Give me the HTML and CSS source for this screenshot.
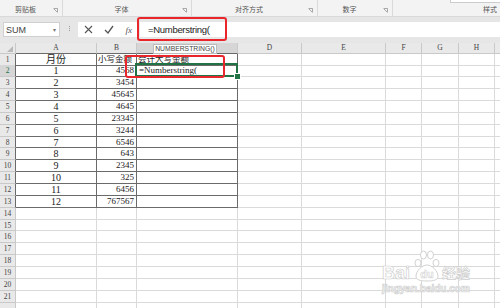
FILE: index.html
```
<!DOCTYPE html>
<html>
	<head>
		<meta charset="UTF-8">
		<title>Numberstring</title>
		<link rel="stylesheet" href="styles.css">
	</head>
	<body>
		<div class="ribbon">
			<div class="group g1"><span class="label">剪贴板</span><svg class="launch" viewBox="0 0 5 5"><path d="M0.5 0.5h4v4M1 1l3 3" fill="none" stroke="#888" stroke-width="0.7"/></svg></div>
			<div class="group g2"><span class="label">字体</span><svg class="launch" viewBox="0 0 5 5"><path d="M0.5 0.5h4v4M1 1l3 3" fill="none" stroke="#888" stroke-width="0.7"/></svg></div>
			<div class="group g3"><span class="label">对齐方式</span><svg class="launch" viewBox="0 0 5 5"><path d="M0.5 0.5h4v4M1 1l3 3" fill="none" stroke="#888" stroke-width="0.7"/></svg></div>
			<div class="group g4"><span class="label">数字</span><svg class="launch" viewBox="0 0 5 5"><path d="M0.5 0.5h4v4M1 1l3 3" fill="none" stroke="#888" stroke-width="0.7"/></svg></div>
			<div class="group g5"><span class="topbox"></span><span class="label">样式</span></div>
		</div>

		<div class="fbar">
			<div class="namebox"><span>SUM</span><span class="drop">▾</span></div>
			<div class="grip"><i></i><i></i><i></i></div>
			<div class="btns">
				<svg width="9" height="9" viewBox="0 0 9 9"><path d="M1 1l7 7M8 1l-7 7" stroke="#555" stroke-width="1.1"/></svg>
				<svg width="10" height="9" viewBox="0 0 10 9"><path d="M1 5l3 3 5-7" fill="none" stroke="#555" stroke-width="1.3"/></svg>
				<span class="fx">fx</span>
			</div>
			<div class="input">=Numberstring(</div>
		</div>

		<div class="sheet">
			<div class="row head"><span class="ch corner"></span><span class="ch tb">A</span><span class="ch tb">B</span><span class="ch tb on"></span><span class="ch">D</span><span class="ch">E</span><span class="ch">F</span><span class="ch">G</span><span class="ch">H</span><span class="ch"></span></div>
			<div class="row"><span class="rh tl">1</span><span class="c t mid">月份</span><span class="c t cap">小写金额</span><span class="c t cap">会计大写金额</span><span class="c"></span><span class="c"></span><span class="c"></span><span class="c"></span><span class="c"></span><span class="c"></span></div>
			<div class="row"><span class="rh tl on">2</span><span class="c t mid">1</span><span class="c t num">4568</span><span class="c t sel">=Numberstring(</span><span class="c"></span><span class="c"></span><span class="c"></span><span class="c"></span><span class="c"></span><span class="c"></span></div>
			<div class="row"><span class="rh tl">3</span><span class="c t mid">2</span><span class="c t num">3454</span><span class="c t"></span><span class="c"></span><span class="c"></span><span class="c"></span><span class="c"></span><span class="c"></span><span class="c"></span></div>
			<div class="row"><span class="rh tl">4</span><span class="c t mid">3</span><span class="c t num">45645</span><span class="c t"></span><span class="c"></span><span class="c"></span><span class="c"></span><span class="c"></span><span class="c"></span><span class="c"></span></div>
			<div class="row"><span class="rh tl">5</span><span class="c t mid">4</span><span class="c t num">4645</span><span class="c t"></span><span class="c"></span><span class="c"></span><span class="c"></span><span class="c"></span><span class="c"></span><span class="c"></span></div>
			<div class="row"><span class="rh tl">6</span><span class="c t mid">5</span><span class="c t num">23345</span><span class="c t"></span><span class="c"></span><span class="c"></span><span class="c"></span><span class="c"></span><span class="c"></span><span class="c"></span></div>
			<div class="row"><span class="rh tl">7</span><span class="c t mid">6</span><span class="c t num">3244</span><span class="c t"></span><span class="c"></span><span class="c"></span><span class="c"></span><span class="c"></span><span class="c"></span><span class="c"></span></div>
			<div class="row"><span class="rh tl">8</span><span class="c t mid">7</span><span class="c t num">6546</span><span class="c t"></span><span class="c"></span><span class="c"></span><span class="c"></span><span class="c"></span><span class="c"></span><span class="c"></span></div>
			<div class="row"><span class="rh tl">9</span><span class="c t mid">8</span><span class="c t num">643</span><span class="c t"></span><span class="c"></span><span class="c"></span><span class="c"></span><span class="c"></span><span class="c"></span><span class="c"></span></div>
			<div class="row"><span class="rh tl">10</span><span class="c t mid">9</span><span class="c t num">2345</span><span class="c t"></span><span class="c"></span><span class="c"></span><span class="c"></span><span class="c"></span><span class="c"></span><span class="c"></span></div>
			<div class="row"><span class="rh tl">11</span><span class="c t mid">10</span><span class="c t num">325</span><span class="c t"></span><span class="c"></span><span class="c"></span><span class="c"></span><span class="c"></span><span class="c"></span><span class="c"></span></div>
			<div class="row"><span class="rh tl">12</span><span class="c t mid">11</span><span class="c t num">6456</span><span class="c t"></span><span class="c"></span><span class="c"></span><span class="c"></span><span class="c"></span><span class="c"></span><span class="c"></span></div>
			<div class="row"><span class="rh tl">13</span><span class="c t mid">12</span><span class="c t num">767567</span><span class="c t"></span><span class="c"></span><span class="c"></span><span class="c"></span><span class="c"></span><span class="c"></span><span class="c"></span></div>
			<div class="row"><span class="rh">14</span><span class="c"></span><span class="c"></span><span class="c"></span><span class="c"></span><span class="c"></span><span class="c"></span><span class="c"></span><span class="c"></span><span class="c"></span></div>
			<div class="row"><span class="rh">15</span><span class="c"></span><span class="c"></span><span class="c"></span><span class="c"></span><span class="c"></span><span class="c"></span><span class="c"></span><span class="c"></span><span class="c"></span></div>
			<div class="row"><span class="rh">16</span><span class="c"></span><span class="c"></span><span class="c"></span><span class="c"></span><span class="c"></span><span class="c"></span><span class="c"></span><span class="c"></span><span class="c"></span></div>
			<div class="row"><span class="rh">17</span><span class="c"></span><span class="c"></span><span class="c"></span><span class="c"></span><span class="c"></span><span class="c"></span><span class="c"></span><span class="c"></span><span class="c"></span></div>
			<div class="row"><span class="rh">18</span><span class="c"></span><span class="c"></span><span class="c"></span><span class="c"></span><span class="c"></span><span class="c"></span><span class="c"></span><span class="c"></span><span class="c"></span></div>
			<div class="row"><span class="rh">19</span><span class="c"></span><span class="c"></span><span class="c"></span><span class="c"></span><span class="c"></span><span class="c"></span><span class="c"></span><span class="c"></span><span class="c"></span></div>
			<div class="row"><span class="rh">20</span><span class="c"></span><span class="c"></span><span class="c"></span><span class="c"></span><span class="c"></span><span class="c"></span><span class="c"></span><span class="c"></span><span class="c"></span></div>
			<div class="row"><span class="rh">21</span><span class="c"></span><span class="c"></span><span class="c"></span><span class="c"></span><span class="c"></span><span class="c"></span><span class="c"></span><span class="c"></span><span class="c"></span></div>
			<div class="row"><span class="rh"></span><span class="c"></span><span class="c"></span><span class="c"></span><span class="c"></span><span class="c"></span><span class="c"></span><span class="c"></span><span class="c"></span><span class="c"></span></div>
		</div>

		<!-- overlays: autocomplete tip, red marks, watermark -->
		<div class="tip">NUMBERSTRING()</div>
		<div class="mark-red mark-formula"></div>
		<div class="mark-red mark-cell"></div>

		<div class="wm">
			<div class="wm-top">
				<span class="wm-bai">Bai</span>
				<svg class="wm-paw" width="26" height="33" viewBox="0 0 26 33">
					<g fill="#fff" stroke="#d2d2d2" stroke-width="1">
						<ellipse cx="4" cy="14" rx="3" ry="3.6"/>
						<ellipse cx="9.5" cy="6" rx="3" ry="4"/>
						<ellipse cx="16.5" cy="6" rx="3" ry="4"/>
						<ellipse cx="22" cy="14" rx="3" ry="3.6"/>
						<path d="M13 16c-5 0-11 6-11 11 0 4 4 5 11 5s11-1 11-5c0-5-6-11-11-11z"/>
					</g>
					<text x="13" y="29" text-anchor="middle" font-family="Liberation Sans, sans-serif" font-weight="bold" font-size="11" fill="#fff" stroke="#d2d2d2" stroke-width="0.6">du</text>
				</svg>
				<span class="wm-jy">经验</span>
			</div>
			<div class="wm-url">jingyan.baidu.com</div>
		</div>
	</body>
</html>
```

FILE: styles.css
```
* {
	box-sizing: border-box;
}
body {
	margin: 0;
	width: 500px;
	height: 308px;
	overflow: hidden;
	position: relative;
	background: #fff;
	font-family: "Liberation Sans", "Noto Sans CJK SC", sans-serif;
}

/* ribbon strip (only the group labels are visible) */
.ribbon {
	display: flex;
	height: 17px;
	background: #f3f3f3;
	border-bottom: 1px solid #d9d9d9;
	overflow: hidden;
}
.group {
	position: relative;
	display: flex;
	align-items: flex-end;
	flex: none;
	padding-bottom: 2px;
	border-right: 1px solid #dadada;
}
.g1 { width: 63px; }
.g2 { width: 129px; }
.g3 { width: 126px; }
.g4 { width: 75px; }
.g5 { width: 107px; border-right: 0; justify-content: flex-end; padding-right: 3px; }
.g5 .label { flex: none; }
.label {
	flex: 1;
	text-align: center;
	font-size: 7px;
	line-height: 9px;
	color: #555;
}
.launch {
	width: 5px;
	height: 5px;
	margin: 0 4px 1px 2px;
}
.topbox {
	position: absolute;
	top: -2px;
	left: 57px;
	width: 60px;
	height: 5px;
	background: #fff;
	border: 1px solid #ccc;
}

/* formula bar */
.fbar {
	display: flex;
	align-items: flex-start;
	height: 26px;
	padding-top: 5px;
	background: #e6e6e6;
}
.namebox {
	display: flex;
	align-items: center;
	justify-content: space-between;
	width: 57px;
	height: 15px;
	margin-left: 3px;
	padding: 0 3px 0 2px;
	background: #fff;
	border: 1px solid #d0d0d0;
	font-size: 9px;
	color: #444;
}
.drop {
	font-size: 6px;
	color: #777;
}
.grip {
	display: flex;
	flex-direction: column;
	align-items: center;
	gap: 1px;
	width: 18px;
	padding-top: 4px;
}
.grip i {
	width: 1px;
	height: 1px;
	background: #999;
}
.btns {
	display: flex;
	align-items: center;
	justify-content: space-between;
	width: 59px;
	height: 15px;
	padding: 0 5px 0 6px;
	background: #fff;
}
.fx {
	font-family: "Liberation Serif", serif;
	font-style: italic;
	font-size: 9px;
	color: #555;
}
.input {
	flex: 1;
	height: 15px;
	margin-left: 3px;
	padding-left: 8px;
	background: #fff;
	font-size: 9.5px;
	line-height: 15px;
	letter-spacing: -0.3px;
	color: #222;
}

/* sheet grid */
.row {
	display: grid;
	grid-template-columns: 16px 81px 40px 101px 64px 84px 36px 37px 36px 40px;
	height: 11.86px;
}
.row.head {
	height: 10.5px;
}
.c, .rh, .ch {
	overflow: hidden;
	white-space: nowrap;
	border-right: 1px solid #dadada;
	border-bottom: 1px solid #dadada;
	font-family: "Liberation Serif", "Noto Sans CJK SC", serif;
}
.c {
	padding: 0 2px;
	font-size: 9px;
	line-height: 11px;
	color: #222;
}
.ch, .rh {
	background: #e9e9e9;
	border-color: #c9c9c9;
	text-align: center;
	font-size: 7.5px;
	color: #444;
}
.ch { line-height: 10px; }
.rh { line-height: 11px; }
.corner {
	position: relative;
}
.corner::after {
	content: "";
	position: absolute;
	right: 2px;
	bottom: 1px;
	border-left: 6px solid transparent;
	border-bottom: 6px solid #b9b9b9;
}
.ch.tb { border-bottom-color: #6a6a6a; }
.rh.tl { border-right-color: #6a6a6a; }
.rh.on, .ch.on {
	background: #d6d6d6;
	color: #217346;
}
.c.t {
	border-color: #6a6a6a;
}
.mid {
	text-align: center;
	font-size: 10px;
}
.cap {
	padding: 0 1px;
	font-size: 8.5px;
	overflow: visible;
}
.num {
	text-align: right;
}
.sel {
	position: relative;
	overflow: visible;
}
.sel::after {
	content: "";
	position: absolute;
	left: -2px;
	top: -2px;
	right: -1px;
	bottom: -1px;
	border: 2px solid #217346;
}
.sel::before {
	content: "";
	position: absolute;
	right: -4px;
	bottom: -4px;
	width: 5px;
	height: 5px;
	background: #217346;
	border: 1px solid #fff;
	z-index: 1;
}

/* overlays */
.tip {
	position: absolute;
	left: 153px;
	top: 44px;
	width: 64px;
	height: 10px;
	background: #fff;
	border: 1px solid #bdbdbd;
	font-size: 6.8px;
	line-height: 8px;
	text-align: center;
	color: #444;
}
.mark-red {
	position: absolute;
	border: 2px solid #e8262b;
	border-radius: 3px;
}
.mark-formula {
	left: 137px;
	top: 17px;
	width: 90px;
	height: 24px;
}
.mark-cell {
	left: 125px;
	top: 55px;
	width: 100px;
	height: 23px;
}

.wm {
	position: absolute;
	left: 382px;
	top: 249px;
	color: #fff;
	-webkit-text-stroke: 0.7px #cfcfcf;
	font-family: "Liberation Sans", "Noto Sans CJK SC", sans-serif;
	font-weight: bold;
}
.wm-top {
	display: flex;
	align-items: flex-end;
}
.wm-bai {
	font-size: 18px;
	line-height: 16px;
	margin-bottom: 1px;
}
.wm-paw {
	margin-left: 4px;
}
.wm-jy {
	font-size: 14px;
	line-height: 16px;
	margin: 0 0 1px 2px;
}
.wm-url {
	font-size: 10px;
	line-height: 12px;
	margin-top: 1px;
}
```
